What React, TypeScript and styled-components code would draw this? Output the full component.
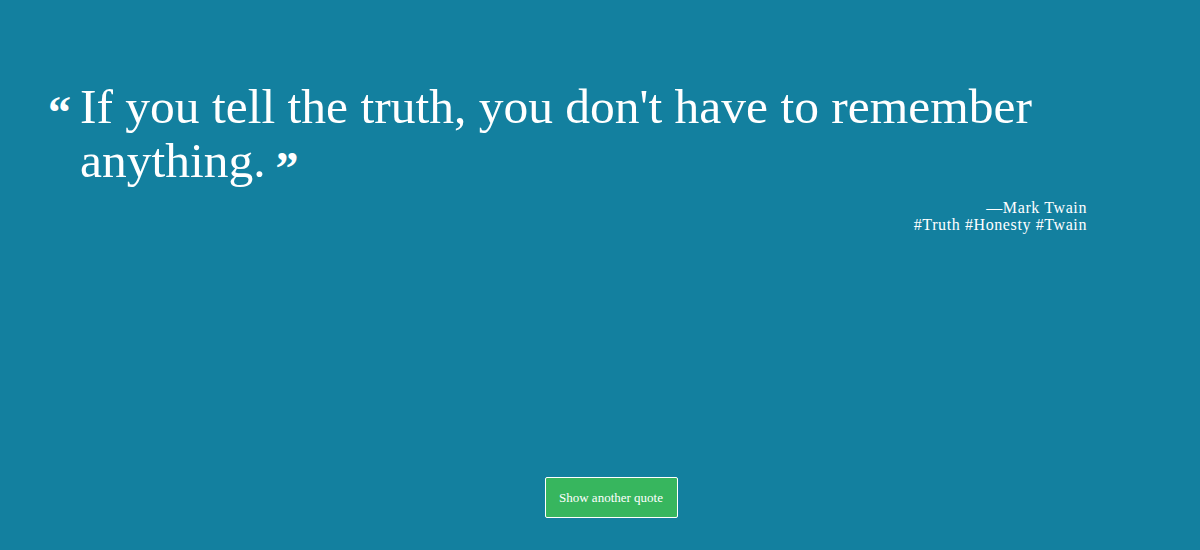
import React from "react";
import styled, { createGlobalStyle } from "styled-components";

const Global = createGlobalStyle`
  html, body { margin: 0; padding: 0; }
  body { background: #13809f; font-family: "Liberation Serif", "DejaVu Serif", serif; }
`;

const Page = styled.div`
  width: 1200px;
  height: 550px;
  background: #13809f;
  color: #fff;
  display: flex;
  flex-direction: column;
  box-sizing: border-box;
  padding: 80px 113px 0 48px;
  overflow: hidden;
`;

const QuoteRow = styled.div`
  display: flex;
  align-items: flex-start;
`;

const OpenMark = styled.span`
  font-family: "Liberation Serif", serif;
  font-weight: bold;
  font-size: 46px;
  line-height: 1;
  width: 32px;
  flex: none;
  margin-top: 10px;
`;

const QuoteText = styled.p`
  margin: 0;
  font-family: "Liberation Serif", serif;
  font-size: 49.5px;
  line-height: 54px;
`;

const CloseMark = styled.span`
  display: inline-block;
  font-family: "Liberation Serif", serif;
  font-weight: bold;
  font-size: 46px;
  line-height: 1;
  vertical-align: top;
  margin-top: 12px;
  margin-left: 10px;
`;

const Attribution = styled.div`
  margin-top: 7px;
  text-align: right;
  font-family: "Liberation Serif", serif;
  font-size: 16px;
  line-height: 17px;
  letter-spacing: 0.6px;
`;

const ButtonRow = styled.div`
  margin-top: auto;
  margin-bottom: 32px;
  display: flex;
  justify-content: center;
  padding-left: 87px;
`;

const Button = styled.button`
  width: 133px;
  height: 41px;
  background: #37b65e;
  color: #fff;
  border: 1px solid #fff;
  border-radius: 2px;
  font-family: "Liberation Serif", serif;
  font-size: 13px;
  cursor: pointer;
`;

export default function App() {
  return (
    <>
      <Global />
      <Page>
        <QuoteRow>
          <OpenMark>“</OpenMark>
          <QuoteText>
            If you tell the truth, you don't have to remember anything.
            <CloseMark>”</CloseMark>
          </QuoteText>
        </QuoteRow>
        <Attribution>
          <div>—Mark Twain</div>
          <div>#Truth #Honesty #Twain</div>
        </Attribution>
        <ButtonRow>
          <Button>Show another quote</Button>
        </ButtonRow>
      </Page>
    </>
  );
}
